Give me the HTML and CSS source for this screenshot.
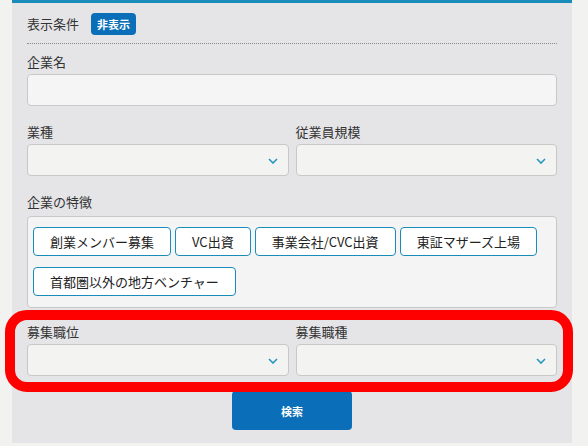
FILE: index.html
```html
<!DOCTYPE html>
<html lang="ja">
<head>
<meta charset="utf-8">
<link rel="stylesheet" href="styles.css">
</head>
<body>
<div class="panel">
  <div class="header">
    <span class="header-label">表示条件</span>
    <span class="badge">非表示</span>
  </div>
  <div class="field">
    <div class="label">企業名</div>
    <div class="input"></div>
  </div>
  <div class="row">
    <div class="field">
      <div class="label">業種</div>
      <div class="select"><svg class="chev" width="10" height="6" viewBox="0 0 10 6"><path d="M1 1 L5 5 L9 1" fill="none" stroke="#2596c2" stroke-width="1.6"/></svg></div>
    </div>
    <div class="field">
      <div class="label">従業員規模</div>
      <div class="select"><svg class="chev" width="10" height="6" viewBox="0 0 10 6"><path d="M1 1 L5 5 L9 1" fill="none" stroke="#2596c2" stroke-width="1.6"/></svg></div>
    </div>
  </div>
  <div class="field features">
    <div class="label">企業の特徴</div>
    <div class="tagbox">
      <span class="tag">創業メンバー募集</span>
      <span class="tag">VC出資</span>
      <span class="tag">事業会社/CVC出資</span>
      <span class="tag">東証マザーズ上場</span>
      <span class="tag">首都圏以外の地方ベンチャー</span>
    </div>
  </div>
  <div class="row">
    <div class="field">
      <div class="label">募集職位</div>
      <div class="select"><svg class="chev" width="10" height="6" viewBox="0 0 10 6"><path d="M1 1 L5 5 L9 1" fill="none" stroke="#2596c2" stroke-width="1.6"/></svg></div>
    </div>
    <div class="field">
      <div class="label">募集職種</div>
      <div class="select"><svg class="chev" width="10" height="6" viewBox="0 0 10 6"><path d="M1 1 L5 5 L9 1" fill="none" stroke="#2596c2" stroke-width="1.6"/></svg></div>
    </div>
  </div>
  <div class="actions">
    <button class="search">検索</button>
  </div>
</div>
<div class="highlight"></div>
</body>
</html>
```
FILE: styles.css
```css
html, body {
  margin: 0;
  padding: 0;
}
body {
  background: #f2f2f1;
  font-family: "Noto Sans CJK JP", "Noto Sans", sans-serif;
  color: #333;
  font-size: 13px;
  position: relative;
  width: 588px;
  height: 446px;
  overflow: hidden;
}
.panel {
  margin-left: 12px;
  width: 560px;
  height: 443px;
  background: #e5e5e8;
  border-top: 3px solid #1a8cba;
  padding: 0 15px;
  box-sizing: border-box;
  display: flex;
  flex-direction: column;
  gap: 16px;
}
.header {
  display: flex;
  align-items: center;
  height: 41px;
  padding-top: 1px;
  box-sizing: border-box;
  border-bottom: 1px dotted #8a8a8a;
  margin-bottom: -8px;
  flex: none;
}
.header-label {
  font-size: 13px;
  line-height: 20px;
}
.badge {
  margin-left: 12px;
  background: #0a6fb8;
  color: #fff;
  font-weight: bold;
  font-size: 11px;
  line-height: 22px;
  padding: 0 6px;
  border-radius: 4px;
}
.field {
  display: flex;
  flex-direction: column;
  flex: none;
}
.row > .field {
  flex: 1;
}
.label {
  line-height: 20px;
  margin-bottom: 2px;
}
.features .label {
  margin-bottom: 4px;
}
.features {
  margin-bottom: -2px;
}
.input {
  height: 32px;
  background: #f5f5f5;
  border: 1px solid #c8c8c8;
  border-radius: 4px;
  box-sizing: border-box;
}
.row {
  display: flex;
  gap: 7px;
  flex: none;
}
.select {
  height: 32px;
  background: #f3f3f2;
  border: 1px solid #c8c8c8;
  border-radius: 4px;
  box-sizing: border-box;
  display: flex;
  align-items: center;
  justify-content: flex-end;
  padding-right: 10px;
}
.chev {
  display: block;
  margin-top: 2px;
}
.tagbox {
  background: #f4f4f4;
  border: 1px solid #c8c8c8;
  border-radius: 4px;
  padding: 10px 5px 11px;
  display: flex;
  flex-wrap: wrap;
  gap: 11px 4px;
  height: 92px;
  box-sizing: border-box;
  align-content: flex-start;
}
.tag {
  background: #fff;
  border: 1px solid #1a8cba;
  border-radius: 4px;
  height: 29px;
  line-height: 27px;
  padding: 0 16px;
  box-sizing: border-box;
  font-size: 13px;
  color: #222;
}
.actions {
  display: flex;
  justify-content: center;
  margin-top: -1px;
  flex: none;
}
.search {
  width: 120px;
  height: 39px;
  background: #0a6fb8;
  color: #fff;
  border: none;
  border-radius: 4px;
  font-family: inherit;
  font-weight: bold;
  font-size: 11px;
}
.highlight {
  position: absolute;
  left: 5px;
  top: 310px;
  width: 568px;
  height: 82px;
  box-sizing: border-box;
  border: 10px solid #ff0000;
  border-radius: 22px;
}
```
